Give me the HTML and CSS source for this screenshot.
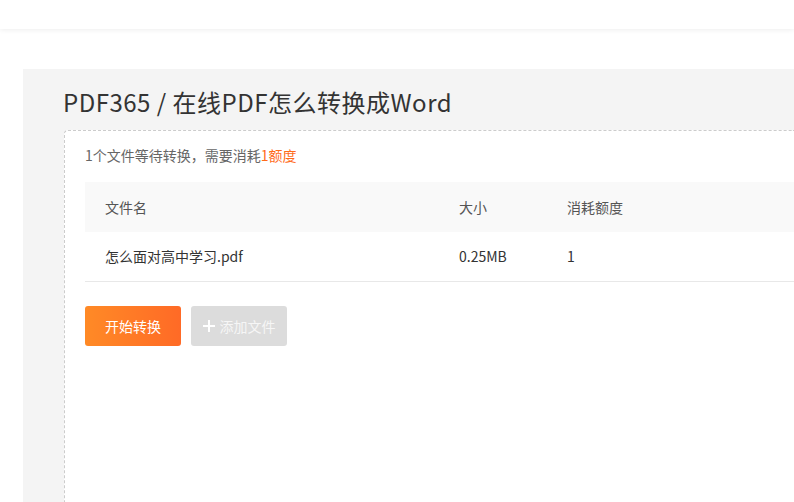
FILE: index.html
```html
<!DOCTYPE html>
<html lang="zh-CN">
<head>
<meta charset="utf-8">
<link rel="stylesheet" href="styles.css">
</head>
<body>
<header class="topbar"></header>
<main class="panel">
  <h1 class="title">PDF365 / 在线PDF怎么转换成Word</h1>
  <section class="card">
    <p class="summary">1个文件等待转换，需要消耗<span class="hl">1额度</span></p>
    <div class="table">
      <div class="row head">
        <span class="c-name">文件名</span>
        <span class="c-size">大小</span>
        <span class="c-cost">消耗额度</span>
      </div>
      <div class="row body">
        <span class="c-name">怎么面对高中学习.pdf</span>
        <span class="c-size">0.25MB</span>
        <span class="c-cost">1</span>
      </div>
    </div>
    <div class="actions">
      <button class="btn primary">开始转换</button>
      <button class="btn disabled"><svg class="plus" viewBox="0 0 12 12" width="12" height="12"><path d="M6 0v12M0 6h12" stroke="#fff" stroke-width="2"/></svg>添加文件</button>
    </div>
  </section>
</main>
</body>
</html>
```
FILE: styles.css
```css
* { box-sizing: border-box; }
html, body { margin: 0; padding: 0; background: #fff; overflow: hidden; }
body {
  font-family: "Noto Sans CJK SC", "Noto Sans", sans-serif;
  color: #333;
  height: 502px;
}
.topbar {
  height: 29px;
  background: #fff;
  box-shadow: 0 1px 5px rgba(0,0,0,0.07);
  position: relative;
  z-index: 1;
}
.panel {
  margin: 40px 0 0 23px;
  background: #f4f4f4;
  padding: 16px 0 0 41px;
  height: 433px;
  overflow: hidden;
}
.title {
  margin: 0 0 0 -1px;
  font-weight: 400;
  font-size: 24px;
  line-height: 34px;
  color: #333;
  letter-spacing: 0.5px;
  height: 45px;
}
.card {
  background: #fff;
  border: 1px dashed #ccc;
  border-right: none;
  border-bottom: none;
  border-radius: 4px 0 0 0;
  padding: 13px 0 0 20px;
  height: 372px;
}
.summary {
  margin: 0;
  font-size: 14px;
  line-height: 22px;
  color: #666;
}
.hl { color: #ff6b1a; }
.table { margin-top: 16px; }
.row {
  display: flex;
  align-items: center;
  height: 50px;
  font-size: 14px;
}
.row.head { background: #f9f9f9; color: #555; }
.row.body { border-bottom: 1px solid #e8e8e8; color: #333; padding-bottom: 1px; }
.c-name { width: 374px; padding-left: 20px; }
.c-size { width: 108px; }
.c-cost { flex: 1; }
.actions {
  display: flex;
  gap: 10px;
  margin-top: 24px;
}
.btn {
  width: 96px;
  height: 40px;
  border: none;
  border-radius: 3px;
  font-family: inherit;
  font-size: 14px;
  color: #fff;
  display: flex;
  align-items: center;
  justify-content: center;
  gap: 5px;
  padding: 0;
}
.btn.primary { background: linear-gradient(90deg, #ff8a26, #ff6a26); }
.btn.disabled { background: #dcdcdc; color: #f6f6f6; }
.plus { display: block; }
```
